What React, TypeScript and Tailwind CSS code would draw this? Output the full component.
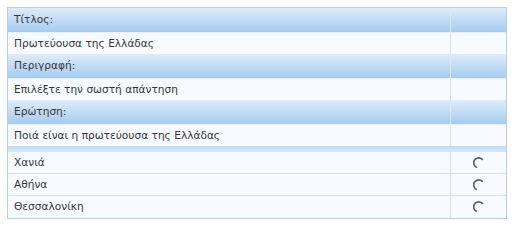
import React from "react";

const font = { fontFamily: '"DejaVu Sans", Verdana, sans-serif' };

function Header({ text }: { text: string }) {
  return (
    <div className="flex h-[24px] bg-gradient-to-b from-[#deecfa] to-[#a6cbf0]">
      <div className="flex-1 flex items-center pl-[6px] text-[10.6px] text-[#363636]">{text}</div>
      <div className="w-[56px] border-l border-[#d9e9f8]" />
    </div>
  );
}

function Row({ text }: { text: string }) {
  return (
    <div className="flex h-[22px] bg-[#f7fbff] border-t border-[#e6f0fa]">
      <div className="flex-1 flex items-center pl-[6px] text-[10.6px] text-[#363636]">{text}</div>
      <div className="w-[56px] border-l border-[#d3e3f3]" />
    </div>
  );
}

function Radio() {
  return (
    <svg width="12" height="12" viewBox="0 0 12 12">
      <path d="M9.3 2.4 A5 5 0 1 0 3.2 10.2" fill="none" stroke="#5f5f5f" strokeWidth="1.7" strokeLinecap="round" />
    </svg>
  );
}

function Option({ text, last }: { text: string; last?: boolean }) {
  return (
    <div className={`flex h-[22px] bg-[#f7fbff] ${last ? "" : "border-b border-[#d5e2ee]"}`}>
      <div className="flex-1 flex items-center pl-[6px] text-[10.6px] text-[#363636]">{text}</div>
      <div className="w-[56px] border-l border-[#d3e3f3] flex items-center justify-center">
        <Radio />
      </div>
    </div>
  );
}

export default function App() {
  return (
    <div className="w-[514px] h-[224px] bg-white pt-[7px] pl-[7px]" style={font}>
      <div className="w-[500px] border border-[#b7d0e8] flex flex-col">
        <Header text="Τίτλος:" />
        <Row text="Πρωτεύουσα της Ελλάδας" />
        <Header text="Περιγραφή:" />
        <Row text="Επιλέξτε την σωστή απάντηση" />
        <Header text="Ερώτηση:" />
        <Row text="Ποιά είναι η πρωτεύουσα της Ελλάδας" />
        <div className="h-[6px] bg-gradient-to-b from-[#c3daf2] to-[#d6e7f8]" />
        <Option text="Χανιά" />
        <Option text="Αθήνα" />
        <Option text="Θεσσαλονίκη" last />
      </div>
    </div>
  );
}
